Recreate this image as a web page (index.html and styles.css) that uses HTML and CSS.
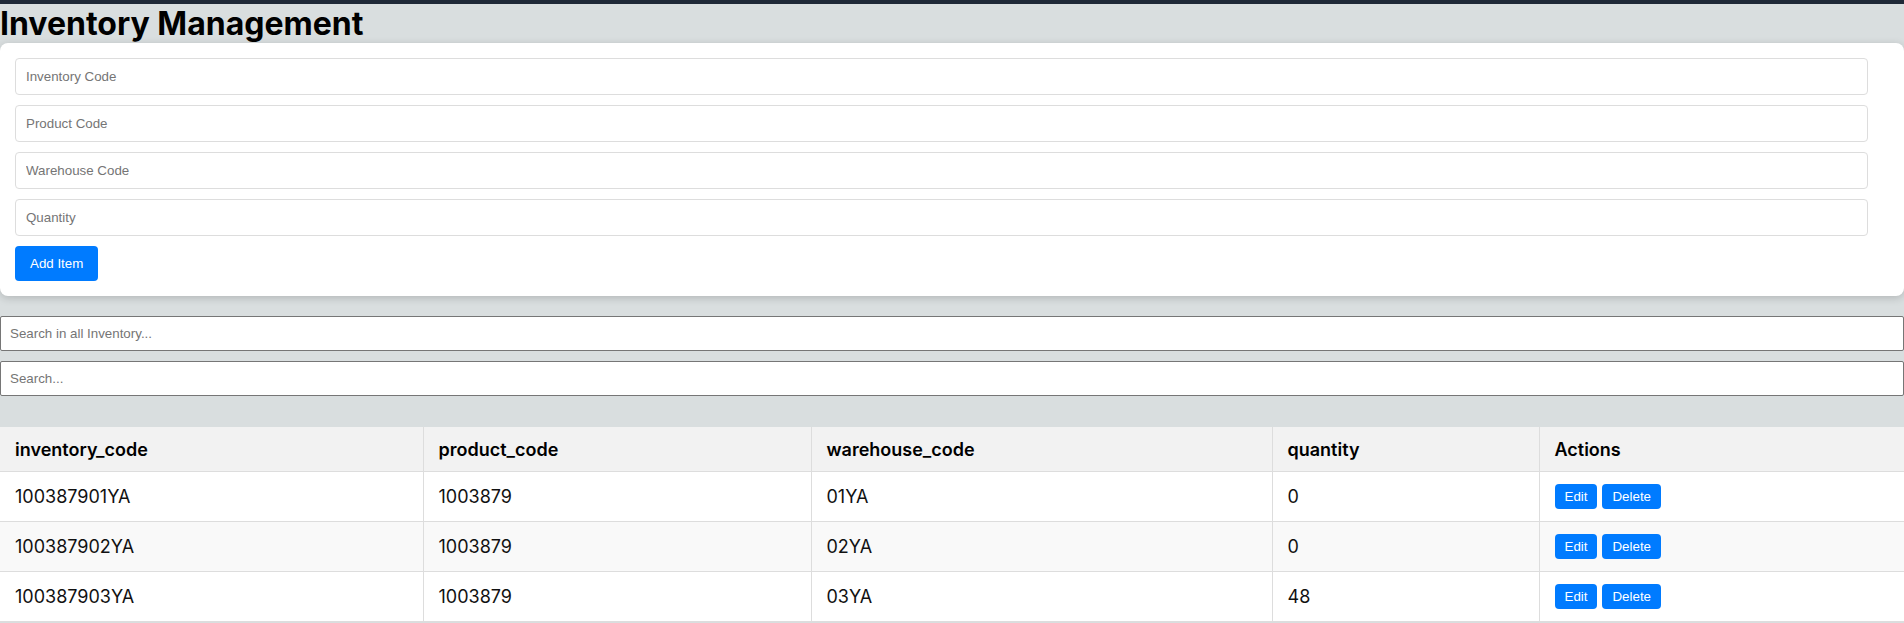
FILE: index.html
```html
<!DOCTYPE html>
<html>
<head>
<meta charset="utf-8">
<link rel="stylesheet" href="styles.css">
</head>
<body>
<div class="topbar"></div>
<h1 class="title">Inventory Management</h1>
<div class="card">
  <input class="field" placeholder="Inventory Code">
  <input class="field" placeholder="Product Code">
  <input class="field" placeholder="Warehouse Code">
  <input class="field" placeholder="Quantity">
  <button class="btn-add">Add Item</button>
</div>
<div class="searches">
  <input class="search" placeholder="Search in all Inventory...">
  <input class="search" placeholder="Search...">
</div>
<table class="grid">
  <colgroup>
    <col class="c1"><col class="c2"><col class="c3"><col class="c4"><col class="c5">
  </colgroup>
  <thead>
    <tr><th>inventory_code</th><th>product_code</th><th>warehouse_code</th><th>quantity</th><th>Actions</th></tr>
  </thead>
  <tbody>
    <tr><td>100387901YA</td><td>1003879</td><td>01YA</td><td>0</td><td><div class="actions"><button class="btn-sm">Edit</button><button class="btn-sm">Delete</button></div></td></tr>
    <tr><td>100387902YA</td><td>1003879</td><td>02YA</td><td>0</td><td><div class="actions"><button class="btn-sm">Edit</button><button class="btn-sm">Delete</button></div></td></tr>
    <tr><td>100387903YA</td><td>1003879</td><td>03YA</td><td>48</td><td><div class="actions"><button class="btn-sm">Edit</button><button class="btn-sm">Delete</button></div></td></tr>
  </tbody>
</table>
</body>
</html>
```
FILE: styles.css
```css
html, body {
  margin: 0;
  padding: 0;
}
body {
  background: #d9dedf;
  font-family: Inter, "Liberation Sans", sans-serif;
  color: #111;
}
.topbar {
  height: 4px;
  background: #1f2937;
}
.title {
  margin: 0;
  font-family: Inter, sans-serif;
  font-weight: 700;
  font-size: 32px;
  line-height: 39px;
  color: #000;
}
.card {
  background: #fff;
  border-radius: 8px;
  box-shadow: 0 2px 8px rgba(0, 0, 0, 0.18);
  padding: 15px 36px 15px 15px;
  display: flex;
  flex-direction: column;
  align-items: flex-start;
  gap: 10px;
  margin-bottom: 20px;
}
.field {
  box-sizing: border-box;
  width: 100%;
  height: 37px;
  padding: 10px;
  border: 1px solid #ddd;
  border-radius: 4px;
  font-family: "Liberation Sans", Arial, sans-serif;
  font-size: 13.33px;
  color: #222;
}
.field::placeholder, .search::placeholder {
  color: #757575;
}
.btn-add {
  height: 35px;
  padding: 0 15px;
  background: #007bff;
  color: #fff;
  border: none;
  border-radius: 4px;
  font-family: "Liberation Sans", Arial, sans-serif;
  font-size: 13.33px;
}
.searches {
  display: flex;
  flex-direction: column;
  gap: 10px;
  margin-bottom: 31px;
}
.search {
  box-sizing: border-box;
  width: 100%;
  height: 35px;
  padding: 0 9px;
  border: 1px solid #767676;
  border-radius: 2px;
  font-family: "Liberation Sans", Arial, sans-serif;
  font-size: 13.33px;
  background: #fff;
}
.grid {
  width: 100%;
  border-collapse: collapse;
  table-layout: fixed;
  background: #fff;
}
.c1 { width: 423px; }
.c2 { width: 388px; }
.c3 { width: 461px; }
.c4 { width: 267px; }
.c5 { width: 365px; }
.grid th, .grid td {
  border: 1px solid #ddd;
  text-align: left;
  padding: 0 15px;
}
.grid th {
  background: #f2f2f2;
  height: 44px;
  font-size: 18px;
  font-weight: 600;
  color: #000;
}
.grid td {
  height: 49px;
  font-size: 18px;
  color: #111;
}
.grid tbody tr:nth-child(even) td {
  background: #f9f9f9;
}
.grid tr:first-child th { border-top: none; }
.grid th:first-child, .grid td:first-child { border-left: none; }
.grid th:last-child, .grid td:last-child { border-right: none; }
.actions {
  display: flex;
  gap: 5px;
}
.btn-sm {
  height: 25px;
  padding: 0 10px;
  background: #007bff;
  color: #fff;
  border: none;
  border-radius: 4px;
  font-family: "Liberation Sans", Arial, sans-serif;
  font-size: 13.33px;
}
```
